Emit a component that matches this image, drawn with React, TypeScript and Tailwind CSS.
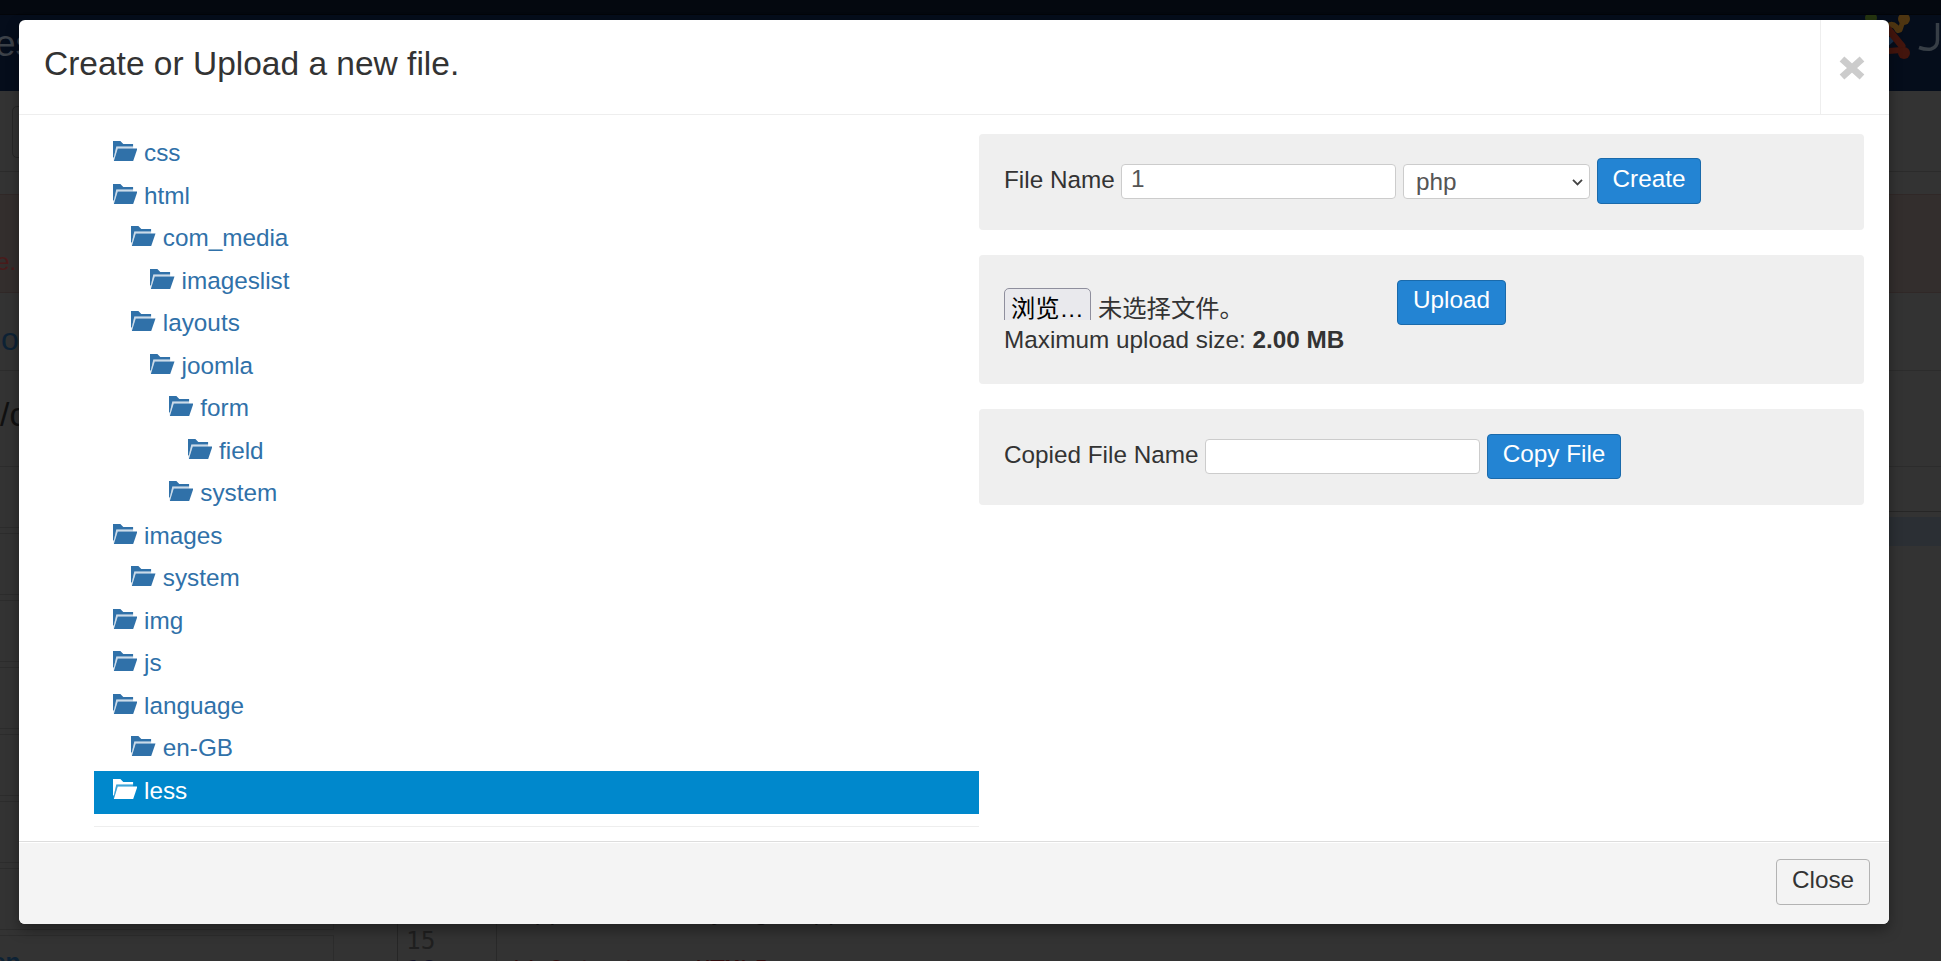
import React from "react";

type Folder = { name: string; pad: string; active?: boolean };

const folders: Folder[] = [
  { name: "css", pad: "pl-[18.5px]" },
  { name: "html", pad: "pl-[18.5px]" },
  { name: "com_media", pad: "pl-[37.3px]" },
  { name: "imageslist", pad: "pl-[56px]" },
  { name: "layouts", pad: "pl-[37.3px]" },
  { name: "joomla", pad: "pl-[56px]" },
  { name: "form", pad: "pl-[74.8px]" },
  { name: "field", pad: "pl-[93.5px]" },
  { name: "system", pad: "pl-[74.8px]" },
  { name: "images", pad: "pl-[18.5px]" },
  { name: "system", pad: "pl-[37.3px]" },
  { name: "img", pad: "pl-[18.5px]" },
  { name: "js", pad: "pl-[18.5px]" },
  { name: "language", pad: "pl-[18.5px]" },
  { name: "en-GB", pad: "pl-[37.3px]" },
  { name: "less", pad: "pl-[18.5px]", active: true },
];

function FolderIcon() {
  return (
    <svg className="mt-[7.5px] h-5 w-[24.5px] shrink-0" viewBox="0 0 25 20" preserveAspectRatio="none" fill="currentColor">
      <path d="M0 0H7.5L10.5 3H20.5V5.6H3.4L0.8 16.5H0Z" />
      <path d="M4.8 7.4H25L20.6 20H0.8Z" />
      <path d="M3.4 5.6H20.5V7.4H4.8L1 18.5H0.4Z" opacity="0.25" />
    </svg>
  );
}

function Button({ children, className }: { children: React.ReactNode; className: string }) {
  return (
    <button
      className={`shrink-0 rounded-[4px] border border-[#1a6aab] bg-[#2384d3] text-center leading-[34px] text-white ${className}`}
    >
      {children}
    </button>
  );
}

function Backdrop() {
  return (
    <div className="absolute inset-0 flex flex-col overflow-hidden bg-[#333]">
      <div className="h-[15px] shrink-0 border-b border-[#030509] bg-[#04080f]" />
      <div className="flex h-[76px] shrink-0 justify-between bg-[#050d1b]">
        <span className="-ml-[5px] mt-[6px] text-[37px] leading-[46px] text-[#3c4148]">es</span>
        <div className="flex">
          <svg className="h-[46px] w-[54px]" viewBox="0 0 54 46">
            <g strokeLinecap="round" fill="none">
              <circle cx="12" cy="3" r="6" fill="#253510" />
              <path d="M25 16Q31 6 37 12L39 15" stroke="#4e3511" strokeWidth="6" />
              <circle cx="45" cy="4" r="6" fill="#4e3511" />
              <path d="M41 15L44 6" stroke="#4e3511" strokeWidth="5" />
              <path d="M26 30L35 22" stroke="#18304b" strokeWidth="6" />
              <path d="M29 14L43 31" stroke="#43150d" strokeWidth="7" />
              <path d="M30 36L42 35" stroke="#43150d" strokeWidth="6" />
              <circle cx="45" cy="38" r="6" fill="#43150d" />
            </g>
          </svg>
          <svg className="h-[46px] w-[28px]" viewBox="0 0 28 46" fill="none" stroke="#373e46" strokeWidth="3.5">
            <path d="M6 32.5Q13 35 18 34Q24.5 32 24.5 25V8" />
          </svg>
        </div>
      </div>
      <div className="h-[81px] shrink-0 border-b border-[#2b2b2b] pl-[12px] pt-[15px]">
        <div className="h-[52px] w-[90px] rounded-[5px] border border-[#262626]" />
      </div>
      <div className="mt-[22px] flex h-[99px] shrink-0 items-end border-y border-[#302827] bg-[#332e2d] pb-[13px]">
        <span className="-ml-[4px] text-[24.375px] leading-[34px] text-[#491b1b]">e.</span>
      </div>
      <div className="h-[78px] shrink-0 border-b border-[#2c2c2c] pl-[1px] pt-[29px] text-[32px] leading-[34px] text-[#0d2235]">
        o
      </div>
      <div className="h-[96px] shrink-0 border-b border-[#2c2c2c] pt-[23px] text-[33.75px] leading-[40px] text-[#101010]">
        /c
      </div>
      <div className="flex min-h-0 flex-1">
        <div className="flex w-[334px] shrink-0 flex-col gap-[5px] pt-[4px]">
          <div className="h-[57px] shrink-0 border-b border-[#2c2c2c]" />
          <div className="h-[62px] shrink-0 border-y border-r border-[#2c2c2c]" />
          <div className="h-[62px] shrink-0 border-y border-r border-[#2c2c2c]" />
          <div className="h-[62px] shrink-0 border-y border-r border-[#2c2c2c]" />
          <div className="h-[62px] shrink-0 border-y border-r border-[#2c2c2c]" />
          <div className="h-[62px] shrink-0 border-y border-r border-[#2c2c2c]" />
          <div className="h-[62px] shrink-0 border-y border-r border-[#2c2c2c]" />
          <div className="-ml-[8px] h-[62px] shrink-0 border-y border-r border-[#2c2c2c] pt-[9px] text-[24.375px] font-bold leading-[34px] text-[#0d2235]">
            en
          </div>
        </div>
        <div className="ml-[63px] mt-[44px] flex flex-1 flex-col border-l border-t border-[#262626]">
          <div className="mt-[5px] h-[29px] shrink-0 bg-[#2b2f34]" />
          <div className="flex flex-1 font-['DejaVu_Sans_Mono',monospace] text-[24.375px] leading-[29px]">
            <div className="w-[99px] shrink-0 border-r border-[#292929] pl-[8px] pt-[351px] text-[#1f1f1f]">
              <div>14</div>
              <div>15</div>
              <div className="text-[#141428]">16</div>
            </div>
            <div className="whitespace-nowrap pl-[8px] pt-[351px]">
              <div className="text-[#141414]">$app = JFactory::getApplication();</div>
              <div className="mt-[29px] text-[#300d0d]">// Output as HTML5</div>
            </div>
          </div>
        </div>
      </div>
    </div>
  );
}

export default function App() {
  return (
    <div className="relative h-[961px] w-[1941px] overflow-hidden font-['Liberation_Sans','Noto_Sans_CJK_SC',sans-serif] text-[24.3px] text-[#333]">
      <Backdrop />
      <div className="relative ml-[19px] mt-5 flex h-[904px] w-[1870px] flex-col overflow-hidden rounded-[6px] bg-white shadow-[0_6px_13px_rgba(0,0,0,0.35)]">
        <header className="flex h-[95px] shrink-0 border-b border-[#eee]">
          <h3 className="flex-1 pl-[25px] pt-[21px] text-[33.5px] leading-[46px]">Create or Upload a new file.</h3>
          <button className="flex w-[69px] items-start border-l border-[#eee] pl-[18px] pt-[35px]" aria-label="Close">
            <svg className="h-[26px] w-[26px]" viewBox="0 0 26 26" stroke="#ccc" strokeWidth="7">
              <path d="M3 4L23 22M23 4L3 22" />
            </svg>
          </button>
        </header>

        <div className="flex h-[726px] shrink-0 pl-[75px] pr-[25px] pt-[18.5px]">
          <div className="h-[693px] w-[885px] border-b border-[#eee]">
            {folders.map((f, i) => (
              <div
                key={i}
                className={`flex h-[42.53px] gap-[7px] leading-[34px] ${f.pad} ${
                  f.active ? "bg-[#0088cc] text-white" : "text-[#3071a9]"
                }`}
              >
                <FolderIcon />
                <span className="mt-[2.5px]">{f.name}</span>
              </div>
            ))}
          </div>

          <div className="flex w-[885px] flex-col gap-[25px] pt-[0.5px]">
            <section className="flex h-[96px] items-start rounded-[4px] bg-[#efefef] px-[25px]">
              <span className="mt-[29px] w-[117px] whitespace-nowrap leading-[34px]">File Name</span>
              <div className="mt-[30px] h-[35px] w-[275px] rounded-[4px] border border-[#ccc] bg-white pl-[9px] leading-[28px] text-[#555]">
                1
              </div>
              <div className="ml-[7px] mt-[30px] flex h-[35px] w-[187px] justify-between rounded-[4px] border border-[#ccc] bg-white pl-[12px] pr-[6px] leading-[34px] text-[#555]">
                php
                <svg className="mt-[13px] h-[9px] w-[11px]" viewBox="0 0 11 9" fill="none" stroke="#444" strokeWidth="1.8">
                  <path d="M1 1.8L5.5 6.4L10 1.8" />
                </svg>
              </div>
              <Button className="ml-[7px] mt-6 h-[46px] w-[104px] pb-[5px]">Create</Button>
            </section>

            <section className="flex h-[129px] items-start rounded-[4px] bg-[#efefef] px-[25px]">
              <div className="mt-[33px] w-[393px]">
                <div className="flex h-[32px] gap-[7px] overflow-hidden">
                  <span className="h-[40px] w-[87px] rounded-[5px] border border-[#8f8f9d] bg-[#e9e9ed] pl-[6px] leading-[40px] text-black">
                    浏览…
                  </span>
                  <span className="leading-[42px]">未选择文件。</span>
                </div>
                <p className="mt-[3px] leading-[34px]">
                  Maximum upload size: <strong>2.00 MB</strong>
                </p>
              </div>
              <Button className="mt-[25px] h-[45px] w-[109px] pb-[6px]">Upload</Button>
            </section>

            <section className="flex h-[96px] items-start rounded-[4px] bg-[#efefef] px-[25px]">
              <span className="mt-[29px] w-[201px] whitespace-nowrap leading-[34px]">Copied File Name</span>
              <div className="mt-[30px] h-[35px] w-[275px] rounded-[4px] border border-[#ccc] bg-white" />
              <Button className="ml-[7px] mt-[25px] h-[45px] w-[134px] pb-[6px]">Copy File</Button>
            </section>
          </div>
        </div>

        <footer className="flex flex-1 items-start justify-end border-t border-[#ddd] bg-[#f4f4f4] pr-[19px] pt-[17px] shadow-[inset_0_1px_0_#fff]">
          <button className="h-[46px] w-[94px] rounded-[4px] border border-[#b3b3b3] bg-[#f3f3f3] pb-[5px] leading-[34px]">
            Close
          </button>
        </footer>
      </div>
    </div>
  );
}
